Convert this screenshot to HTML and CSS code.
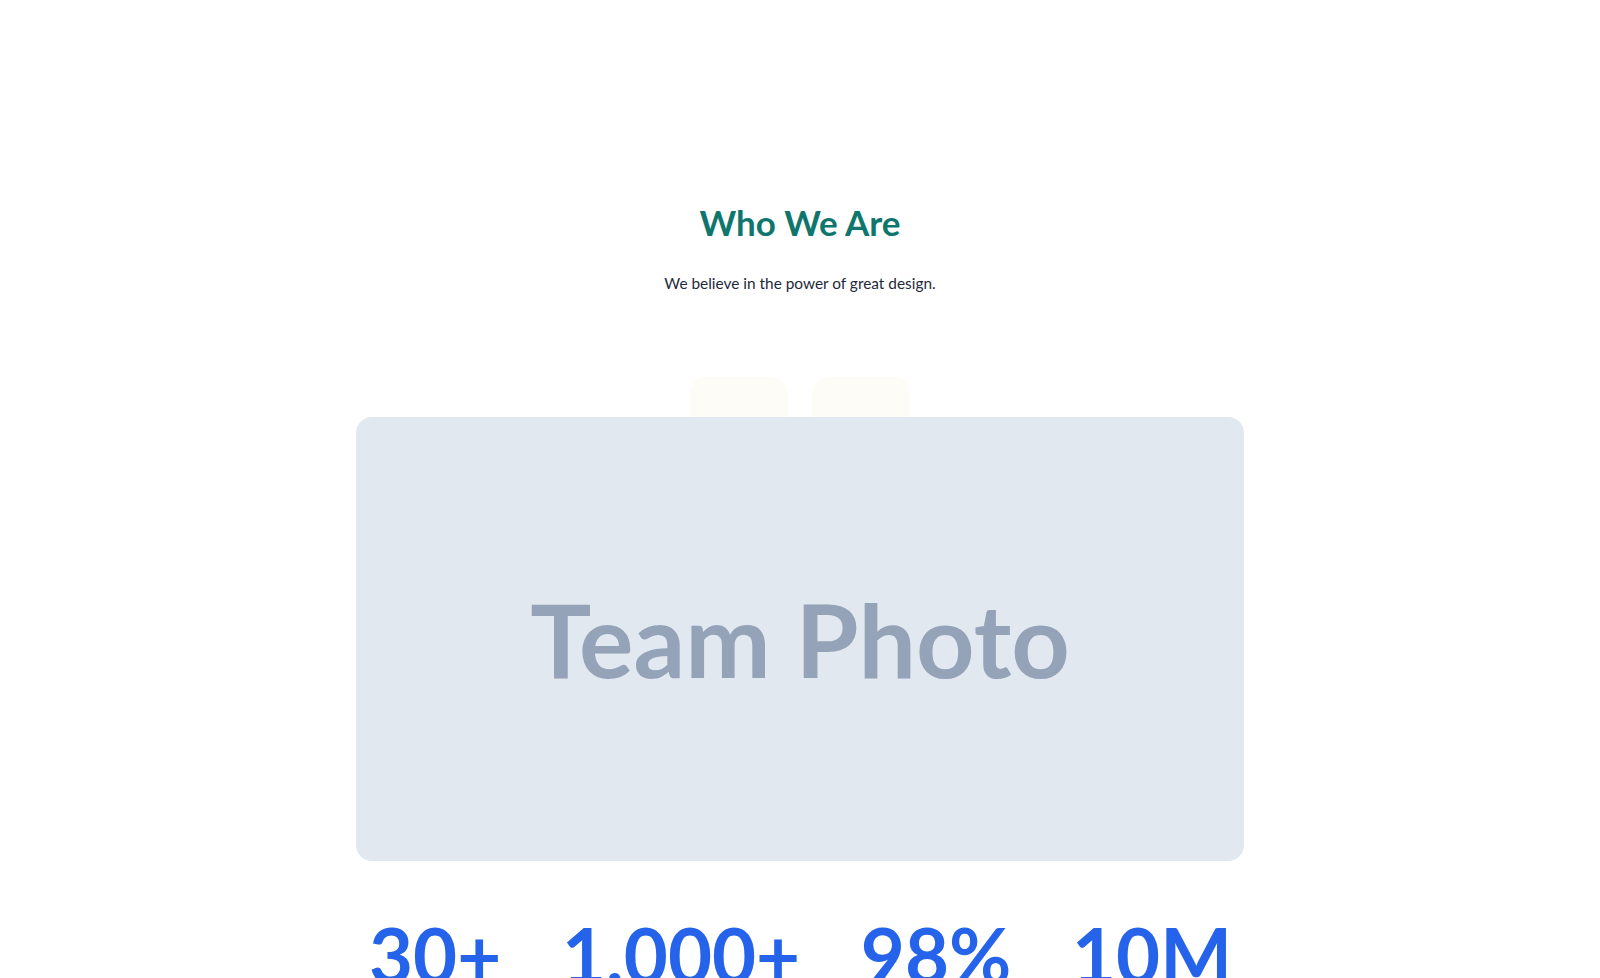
FILE: index.html
```html
<!DOCTYPE html>
<html lang="en">
<head>
  <meta charset="UTF-8" />
  <meta name="viewport" content="width=device-width, initial-scale=1.0"/>
  <title>About Us</title>
  <link rel="stylesheet" href="styles.css">
</head>
<body>
  <section class="about">
    <h2 class="about-title">Who We Are</h2>
    <p class="about-lead">We believe in the power of great design.</p>

    <div class="tabs">
      <div class="tab"></div>
      <div class="tab"></div>
    </div>

    <div class="team-photo">
      <span>Team Photo</span>
    </div>

    <div class="stats">
      <div class="stat">30+</div>
      <div class="stat">1,000+</div>
      <div class="stat">98%</div>
      <div class="stat">10M</div>
    </div>
  </section>
</body>
</html>
```

FILE: styles.css
```css
body {
  font-family: 'Lato', sans-serif;
  background-color: #ffffff;
  margin: 0;
  padding: 0;
}

.about {
  max-width: 888px;
  margin: 0 auto;
  padding-top: 202px;
  text-align: center;
}

.about-title {
  color: #0f766e;
  font-size: 35px;
  font-weight: 700;
  line-height: 40px;
  margin: 0;
}

.about-lead {
  color: #1e293b;
  font-size: 15.4px;
  line-height: 22px;
  margin: 30px 0 0;
}

.tabs {
  display: flex;
  justify-content: center;
  gap: 24px;
  margin-top: 83px;
  margin-bottom: -20px;
}

.tab {
  width: 98px;
  height: 60px;
  background-color: #fdfcf6;
  border-radius: 16px;
}

.team-photo {
  position: relative;
  height: 444px;
  background-color: #e2e8f0;
  border-radius: 16px;
  display: flex;
  align-items: center;
  justify-content: center;
}

.team-photo span {
  color: #94a3b8;
  font-size: 102px;
  font-weight: 700;
  line-height: 1;
}

.stats {
  display: flex;
  justify-content: space-between;
  padding: 0 12px 0 13px;
  margin-top: 56px;
}

.stat {
  color: #2563eb;
  font-size: 76px;
  font-weight: 700;
  line-height: 1;
}
```
